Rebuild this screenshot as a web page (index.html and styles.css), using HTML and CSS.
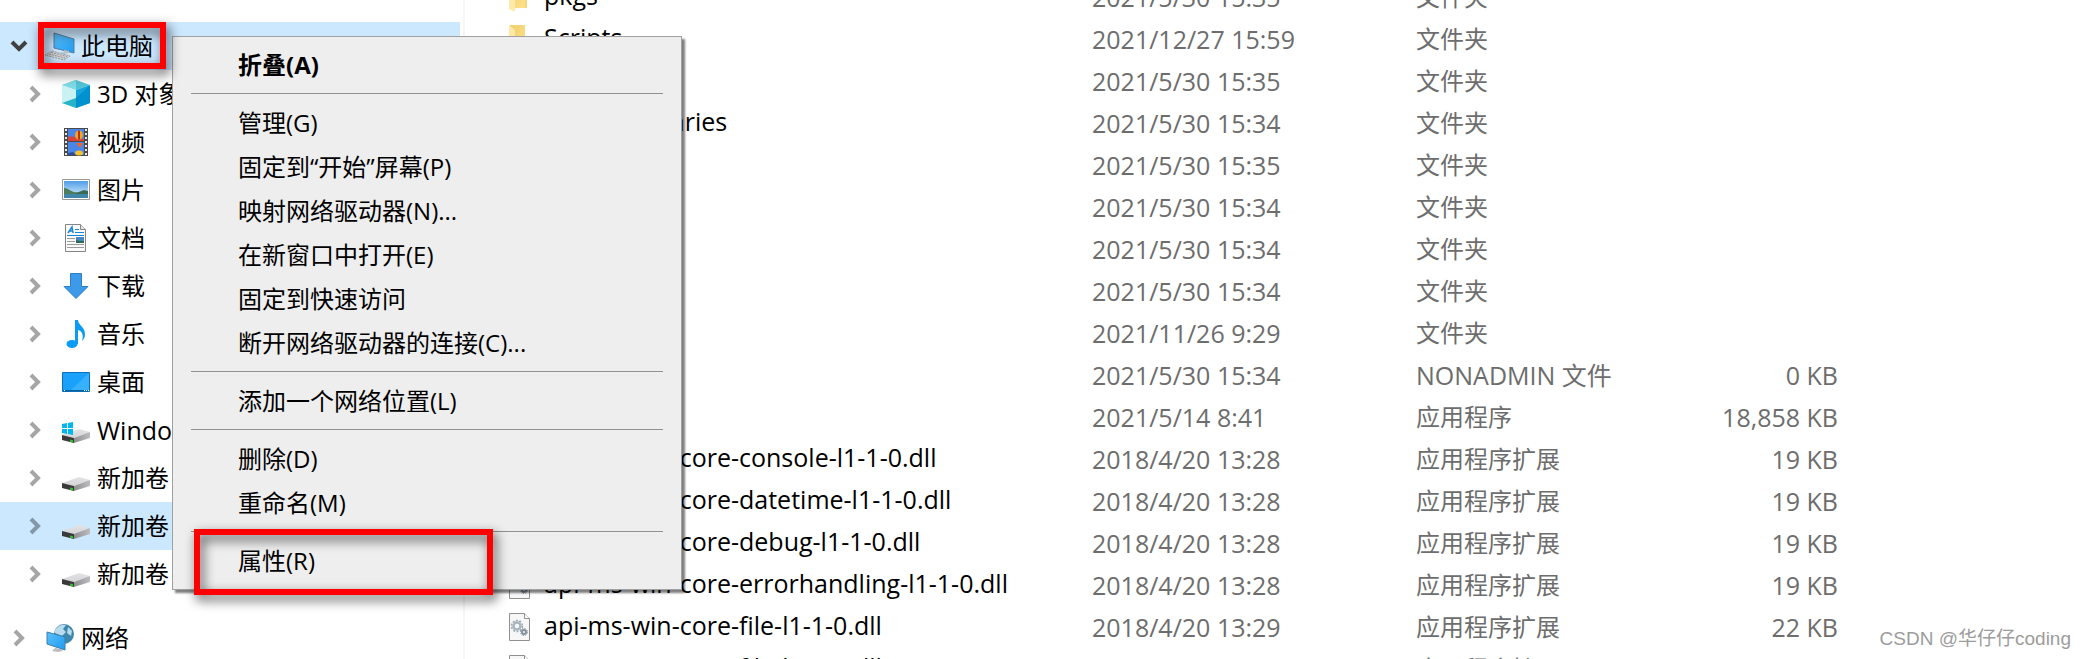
FILE: index.html
```html
<!DOCTYPE html>
<html lang="zh-CN">
<head>
  <meta charset="UTF-8">
  <meta name="viewport" content="width=device-width, initial-scale=1.0">
  <title>文件资源管理器</title>
  <link rel="stylesheet" href="styles.css">
</head>
<body>
  <!-- shared icons -->
  <svg class="defs" width="0" height="0" aria-hidden="true">
    <defs>
      <linearGradient id="screen" x1="0" y1="0" x2="1" y2="1">
        <stop offset="0" stop-color="#5cc0fb"/><stop offset="1" stop-color="#1e9bf0"/>
      </linearGradient>
      <linearGradient id="driveTop" x1="0" y1="0" x2="0" y2="1">
        <stop offset="0" stop-color="#e4e4e6"/><stop offset="1" stop-color="#d4d4d7"/>
      </linearGradient>
      <linearGradient id="driveSide" x1="0" y1="0" x2="1" y2="0">
        <stop offset="0" stop-color="#8f8f91"/><stop offset="1" stop-color="#bdbdbf"/>
      </linearGradient>
      <linearGradient id="sky" x1="0" y1="0" x2="0" y2="1">
        <stop offset="0" stop-color="#4f9ee8"/><stop offset="1" stop-color="#e4f3fc"/>
      </linearGradient>
      <linearGradient id="folder" x1="0" y1="0" x2="1" y2="1">
        <stop offset="0" stop-color="#efd06c"/><stop offset="1" stop-color="#ffe08a"/>
      </linearGradient>
      <symbol id="chevron" viewBox="0 0 12 18">
        <path d="M2 2l7 7-7 7" fill="none" stroke="currentColor" stroke-width="4"/>
      </symbol>
      <symbol id="drive" viewBox="0 0 28 28">
        <path d="M0 19l17-6 11 3-16 6z" fill="url(#driveTop)"/>
        <path d="M12 22l16-6v6l-16 5z" fill="url(#driveSide)"/>
        <path d="M0 19l12 3v5L0 24z" fill="#3a3a3a"/>
        <path d="M8 23.500l3 .8v2l-3-.8z" fill="#2fc72f"/>
      </symbol>
      <symbol id="folder-icon" viewBox="0 0 21 28">
        <path d="M1 0h15v25H3z" fill="url(#folder)"/>
        <path d="M16 13h2v12h-2z" fill="#f5d77a"/>
        <path d="M0 0l6 5v24L0 26z" fill="#ffe9a8"/>
      </symbol>
      <symbol id="dll" viewBox="0 0 21 28">
        <path d="M.5.5h15l5 5v22H.5z" fill="#f7f7f7" stroke="#8f8f8f"/>
        <path d="M15.500.5v5h5" fill="#fff" stroke="#8f8f8f"/>
        <circle cx="8" cy="13" r="3.500" fill="none" stroke="#a9b5be" stroke-width="2.500"/>
        <circle cx="8" cy="13" r="5.500" fill="none" stroke="#9aa9b4" stroke-width="1.500" stroke-dasharray="2 1.450"/>
        <circle cx="15" cy="19" r="2" fill="none" stroke="#84939f" stroke-width="2"/>
        <circle cx="15" cy="19" r="3.500" fill="none" stroke="#84939f" stroke-width="1" stroke-dasharray="1.500 1.250"/>
      </symbol>
    </defs>
  </svg>

  <nav class="sidebar" aria-label="导航窗格">
    <div class="node root selected">
      <button class="toggle open" aria-label="折叠"><svg><use href="#chevron"/></svg></button>
      <a href="#pc">
        <svg class="icon" viewBox="0 0 28 28">
          <path d="M8 1l20 6v14L8 16z" fill="url(#screen)" stroke="#5b7f99"/>
          <path d="M18 18l5 1v2l-6 1-4-1 5-1z" fill="#b9bec2"/>
          <path d="M6 19l18 5-6 4L-1 23z" fill="#d5d7d9" stroke="#9a9da0" stroke-dasharray="2 1"/>
          <path d="M3 22l16 4M5 20.500l16 4" stroke="#8f9397" stroke-dasharray="2 1"/>
        </svg>
        <span>此电脑</span>
      </a>
      <i class="mark mark-pc"></i>
    </div>
    <div class="node">
      <button class="toggle" aria-label="展开"><svg><use href="#chevron"/></svg></button>
      <a href="#3d">
        <svg class="icon" viewBox="0 0 28 28">
          <path d="M0 5l14-5 14 5-14 5z" fill="#53c3d6"/>
          <path d="M0 5l14-5v10z" fill="#7fdbe6"/>
          <path d="M0 5l14 5v18L0 23z" fill="#c9f2f3"/>
          <path d="M14 18v10L0 23z" fill="#29b3c6"/>
          <path d="M28 5l-14 5v18l14-5z" fill="#15a5dc"/>
          <path d="M28 5l-14 13v10l14-5z" fill="#0092cf"/>
        </svg>
        <span>3D 对象</span>
      </a>
    </div>
    <div class="node">
      <button class="toggle" aria-label="展开"><svg><use href="#chevron"/></svg></button>
      <a href="#videos">
        <svg class="icon" viewBox="0 0 28 28">
          <path d="M2 0h24v28H2z" fill="#4a4a4a"/>
          <path d="M4 1v27M24 1v27" stroke="#e9e9e9" stroke-width="2" stroke-dasharray="2 2"/>
          <path d="M6 1h16v12H6zM6 14h16v13H6z" fill="#4a86ea"/>
          <path d="M6 10c2-3 4-1 6-1s5 1 10 2v2H6z" fill="#d9433a"/>
          <ellipse cx="17" cy="7" rx="4" ry="4.500" fill="#f2a51d"/>
          <path d="M17 2.500v9" stroke="#b8321d" stroke-width="2"/>
          <path d="M14 15h7l-3 5z" fill="#e7682a"/>
          <ellipse cx="17" cy="25" rx="4" ry="2.500" fill="#f5c22b"/>
          <path d="M6 25l5-1 3 3H6z" fill="#2b4da0"/>
        </svg>
        <span>视频</span>
      </a>
    </div>
    <div class="node">
      <button class="toggle" aria-label="展开"><svg><use href="#chevron"/></svg></button>
      <a href="#pictures">
        <svg class="icon" viewBox="0 0 28 28">
          <path d="M.5 3.500h27v20H.5z" fill="#fff" stroke="#9a9a9a"/>
          <path d="M2 5h24v17H2z" fill="url(#sky)"/>
          <path d="M2 12c4 0 6 3 10 4l14 2v1H2z" fill="#4c7d5a"/>
          <path d="M14 17l8-3 4 1v4H14z" fill="#3a6b57"/>
          <path d="M2 18h24v4H2z" fill="#3f86a8"/>
        </svg>
        <span>图片</span>
      </a>
    </div>
    <div class="node">
      <button class="toggle" aria-label="展开"><svg><use href="#chevron"/></svg></button>
      <a href="#documents">
        <svg class="icon" viewBox="0 0 28 28">
          <path d="M3.500.5h15l5 5v22h-20z" fill="#fafafa" stroke="#858585"/>
          <path d="M18.500.5v5h5" fill="#e8e8e8" stroke="#858585"/>
          <path d="M6 9l4-6 1 6M7 7h4" fill="none" stroke="#1686d9" stroke-width="1.500"/>
          <path d="M13 5.500h4M13 8.500h9M5 11.500h17" stroke="#1686d9"/>
          <path d="M5 14.500h8M5 17.500h8M5 20.500h17M5 23.500h17" stroke="#9b9b9b"/>
          <path d="M14 13h8v6h-8z" fill="#4b86c4"/>
          <path d="M14 16l4 1 4 0v2h-8z" fill="#2f6a50"/>
        </svg>
        <span>文档</span>
      </a>
    </div>
    <div class="node">
      <button class="toggle" aria-label="展开"><svg><use href="#chevron"/></svg></button>
      <a href="#downloads">
        <svg class="icon" viewBox="0 0 28 28">
          <path d="M8.500 1.500h11v13h6.500L14 26.500 2 14.500h6.500z" fill="#3d9ae8" stroke="#2b7fcb"/>
        </svg>
        <span>下载</span>
      </a>
    </div>
    <div class="node">
      <button class="toggle" aria-label="展开"><svg><use href="#chevron"/></svg></button>
      <a href="#music">
        <svg class="icon" viewBox="0 0 28 28">
          <ellipse cx="10" cy="24" rx="5.500" ry="4" fill="#0a9bf5"/>
          <path d="M13 0h3c0 5 7 7 7 14 0 3-1 5-3 7 2-6 0-10-4-11v14h-3z" fill="#0a9bf5"/>
        </svg>
        <span>音乐</span>
      </a>
    </div>
    <div class="node">
      <button class="toggle" aria-label="展开"><svg><use href="#chevron"/></svg></button>
      <a href="#desktop">
        <svg class="icon" viewBox="0 0 28 28">
          <path d="M.5 4.500h27v19H.5z" fill="#1aa1fc" stroke="#0a6fb8"/>
          <path d="M27 5v17H9z" fill="#37b1ff"/>
          <path d="M1 22h26v1H1z" fill="#0a5f9f"/>
          <path d="M2 22.500h1M22 22.500h5" stroke="#fff" stroke-dasharray="1 1"/>
        </svg>
        <span>桌面</span>
      </a>
    </div>
    <div class="node">
      <button class="toggle" aria-label="展开"><svg><use href="#chevron"/></svg></button>
      <a href="#c">
        <svg class="icon" viewBox="0 0 28 28">
          <use href="#drive"/>
          <path d="M0 8l5-1v5H0zM6 7l5-1v6H6zM0 13h5v5l-5-1zM6 13h5v6l-5-1z" fill="#00b7f1"/>
        </svg>
        <span class="latin">Windows</span>
      </a>
    </div>
    <div class="node">
      <button class="toggle" aria-label="展开"><svg><use href="#chevron"/></svg></button>
      <a href="#d"><svg class="icon"><use href="#drive"/></svg><span>新加卷</span></a>
    </div>
    <div class="node selected">
      <button class="toggle" aria-label="展开"><svg><use href="#chevron"/></svg></button>
      <a href="#e"><svg class="icon"><use href="#drive"/></svg><span>新加卷</span></a>
    </div>
    <div class="node">
      <button class="toggle" aria-label="展开"><svg><use href="#chevron"/></svg></button>
      <a href="#f"><svg class="icon"><use href="#drive"/></svg><span>新加卷</span></a>
    </div>
    <div class="node root network">
      <button class="toggle" aria-label="展开"><svg><use href="#chevron"/></svg></button>
      <a href="#network">
        <svg class="icon" viewBox="0 0 28 28">
          <circle cx="18" cy="10" r="10" fill="#3f86ad"/>
          <path d="M9 6c3-5 8-6 11-5l-3 4 3 3-4 4-7-3zM22 3l4 4-1 5-4-3z" fill="#b9dcec"/>
          <path d="M1 8l18 5v13L1 20z" fill="url(#screen)" stroke="#3a7fae"/>
          <path d="M9 24l6 1 2 2-5 1-6-1z" fill="#b9bec2"/>
        </svg>
        <span>网络</span>
      </a>
    </div>
  </nav>

  <main class="files">
    <table>
      <colgroup>
        <col class="col-name"><col class="col-date"><col class="col-type"><col class="col-size"><col>
      </colgroup>
      <tbody>
        <tr><td><svg><use href="#folder-icon"/></svg>pkgs</td><td>2021/5/30 15:35</td><td class="type">文件夹</td><td></td><td></td></tr>
        <tr><td><svg><use href="#folder-icon"/></svg>Scripts</td><td>2021/12/27 15:59</td><td class="type">文件夹</td><td></td><td></td></tr>
        <tr><td><svg><use href="#folder-icon"/></svg>share</td><td>2021/5/30 15:35</td><td class="type">文件夹</td><td></td><td></td></tr>
        <tr><td><svg><use href="#folder-icon"/></svg>shared-libraries</td><td>2021/5/30 15:34</td><td class="type">文件夹</td><td></td><td></td></tr>
        <tr><td><svg><use href="#folder-icon"/></svg>shell</td><td>2021/5/30 15:35</td><td class="type">文件夹</td><td></td><td></td></tr>
        <tr><td><svg><use href="#folder-icon"/></svg>sip</td><td>2021/5/30 15:34</td><td class="type">文件夹</td><td></td><td></td></tr>
        <tr><td><svg><use href="#folder-icon"/></svg>tcl</td><td>2021/5/30 15:34</td><td class="type">文件夹</td><td></td><td></td></tr>
        <tr><td><svg><use href="#folder-icon"/></svg>Tools</td><td>2021/5/30 15:34</td><td class="type">文件夹</td><td></td><td></td></tr>
        <tr><td><svg><use href="#folder-icon"/></svg>work</td><td>2021/11/26 9:29</td><td class="type">文件夹</td><td></td><td></td></tr>
        <tr><td><svg><use href="#dll"/></svg>.nonadmin</td><td>2021/5/30 15:34</td><td>NONADMIN 文件</td><td>0 KB</td><td></td></tr>
        <tr><td><svg><use href="#dll"/></svg>_conda.exe</td><td>2021/5/14 8:41</td><td class="type">应用程序</td><td>18,858 KB</td><td></td></tr>
        <tr><td><svg><use href="#dll"/></svg>api-ms-win-core-console-l1-1-0.dll</td><td>2018/4/20 13:28</td><td class="type">应用程序扩展</td><td>19 KB</td><td></td></tr>
        <tr><td><svg><use href="#dll"/></svg>api-ms-win-core-datetime-l1-1-0.dll</td><td>2018/4/20 13:28</td><td class="type">应用程序扩展</td><td>19 KB</td><td></td></tr>
        <tr><td><svg><use href="#dll"/></svg>api-ms-win-core-debug-l1-1-0.dll</td><td>2018/4/20 13:28</td><td class="type">应用程序扩展</td><td>19 KB</td><td></td></tr>
        <tr><td><svg><use href="#dll"/></svg>api-ms-win-core-errorhandling-l1-1-0.dll</td><td>2018/4/20 13:28</td><td class="type">应用程序扩展</td><td>19 KB</td><td></td></tr>
        <tr><td><svg><use href="#dll"/></svg>api-ms-win-core-file-l1-1-0.dll</td><td>2018/4/20 13:29</td><td class="type">应用程序扩展</td><td>22 KB</td><td></td></tr>
        <tr><td><svg><use href="#dll"/></svg>api-ms-win-core-file-l1-2-0.dll</td><td>2018/4/20 13:29</td><td class="type">应用程序扩展</td><td>19 KB</td><td></td></tr>
      </tbody>
    </table>
  </main>

  <div class="menu" role="menu">
    <button role="menuitem" class="default">折叠(A)</button>
    <hr>
    <button role="menuitem">管理(G)</button>
    <button role="menuitem">固定到“开始”屏幕(P)</button>
    <button role="menuitem">映射网络驱动器(N)...</button>
    <button role="menuitem">在新窗口中打开(E)</button>
    <button role="menuitem">固定到快速访问</button>
    <button role="menuitem">断开网络驱动器的连接(C)...</button>
    <hr>
    <button role="menuitem">添加一个网络位置(L)</button>
    <hr>
    <button role="menuitem">删除(D)</button>
    <button role="menuitem">重命名(M)</button>
    <hr>
    <button role="menuitem">属性(R)<i class="mark mark-props"></i></button>
  </div>

  <div class="watermark">CSDN @华仔仔coding</div>
</body>
</html>
```
FILE: styles.css
```css
* { box-sizing: border-box; margin: 0; padding: 0; }
body {
  font-family: 'Open Sans', 'Noto Sans CJK SC', sans-serif;
  font-size: 24px;
  line-height: 32px;
  background: #fff;
  color: #000;
  display: flex;
  height: 100vh;
  overflow: hidden;
  position: relative;
}
button {
  font: inherit;
  color: inherit;
  background: none;
  border: none;
}
.defs { position: absolute; }

/* navigation tree */
.sidebar {
  width: 465px;
  flex-shrink: 0;
  padding: 22px 3px 0 0;
  border-right: 2px solid #f5f5f5;
}
.node {
  display: flex;
  align-items: center;
  height: 48px;
  padding-left: 26px;
  position: relative;
}
.node.root { padding-left: 10px; }
.node.selected { background: #cce8ff; }
.node.network { margin-top: 16px; }
.node a {
  display: flex;
  align-items: center;
  gap: 7px;
  color: #000;
  text-decoration: none;
}
.node .latin { font-size: 25px; }
.toggle {
  display: flex;
  align-items: center;
  justify-content: center;
  width: 18px;
  height: 18px;
  margin-right: 18px;
  color: #a6a6a6;
}
.selected .toggle { color: #8397a8; }
.toggle svg { width: 12px; height: 18px; }
.selected .toggle.open { color: #404040; }
.toggle.open svg { transform: rotate(90deg); }
.icon {
  width: 28px;
  height: 28px;
  flex-shrink: 0;
  overflow: visible;
}

/* file list */
.files {
  flex: 1;
  min-width: 0;
  margin-top: -24px;
  padding-left: 44px;
}
table {
  width: 100%;
  table-layout: fixed;
  border-collapse: collapse;
}
.col-name { width: 583px; }
.col-date { width: 324px; }
.col-type { width: 300px; }
.col-size { width: 122px; }
td {
  height: 42px;
  color: #6d6d6d;
  font-size: 25px;
  white-space: nowrap;
}
td.type { font-size: 24px; }
td:first-child { color: #000; }
td:nth-child(4) { text-align: right; }
td svg {
  width: 21px;
  height: 28px;
  margin: 0 14px 4px 0;
  vertical-align: middle;
}

/* context menu */
.menu {
  position: absolute;
  left: 172px;
  top: 36px;
  width: 510px;
  padding: 7px 0 5px;
  background: #eee;
  border: 1px solid #a0a0a0;
  box-shadow: 3px 3px 2px rgba(0,0,0,0.5);
}
.menu button {
  display: block;
  width: 100%;
  height: 44px;
  padding: 0 0 2px 65px;
  text-align: left;
  position: relative;
}
.menu .default { font-weight: 700; }
.menu hr {
  border: none;
  height: 1px;
  margin: 5px 18px 8px;
  background: #919191;
}

/* red frames */
.mark {
  position: absolute;
  border: 6px solid #f00;
  filter: drop-shadow(3px 5px 6px rgba(0,0,0,0.7));
  z-index: 2;
}
.mark-pc {
  left: 38px;
  top: 0;
  width: 128px;
  height: 47px;
}
.mark-props {
  left: 21px;
  top: -11px;
  width: 299px;
  height: 66px;
}

.watermark {
  position: absolute;
  right: 15px;
  bottom: 6px;
  font-family: 'Liberation Sans', 'Noto Sans CJK SC', sans-serif;
  font-size: 19px;
  line-height: 28px;
  color: #9c9c9c;
  text-shadow: -1px -1px 0 #fff;
}
```
